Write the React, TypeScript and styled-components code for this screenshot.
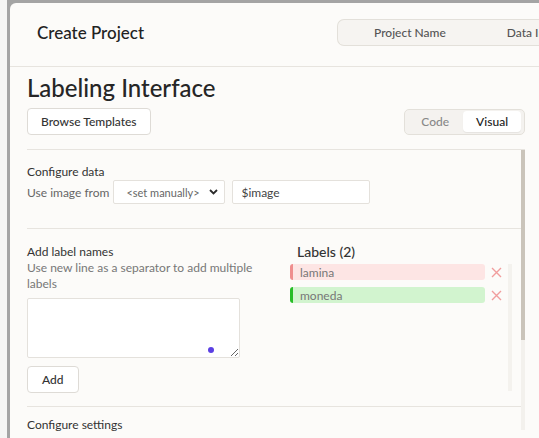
import React from "react";
import styled, { createGlobalStyle } from "styled-components";

type Label = {
    name: string;
    bg: string;
    bar: string;
};

const labels: Label[] = [
    { name: "lamina", bg: "#fde5e4", bar: "#ef8e8e" },
    { name: "moneda", bg: "#d2f4cf", bar: "#27bd27" },
];

const GlobalStyle = createGlobalStyle`
    html, body {
        margin: 0;
        padding: 0;
        background: #f5f5f4;
        overflow: hidden;
    }
    body {
        font-family: "Lato", "Liberation Sans", sans-serif;
        color: #222;
    }
    * {
        box-sizing: border-box;
    }
`;

export default function App() {
    return (
        <>
            <GlobalStyle />
            <Page>
                <Backdrop>
                    <Modal>
                        <Header>
                            <ModalTitle>Create Project</ModalTitle>
                            <Tabs>
                                <Tab>Project Name</Tab>
                                <Tab>Data Import</Tab>
                            </Tabs>
                        </Header>

                        <Body>
                            <PageTitle>Labeling Interface</PageTitle>
                            <Toolbar>
                                <Button>Browse Templates</Button>
                                <Toggle>
                                    <ToggleItem>Code</ToggleItem>
                                    <ToggleItem active>Visual</ToggleItem>
                                </Toggle>
                            </Toolbar>

                            <ScrollArea>
                                <Content>
                                    <Section pt={14} pb={24}>
                                        <SectionTitle>Configure data</SectionTitle>
                                        <DataRow>
                                            <Muted>Use image from</Muted>
                                            <SelectBox>
                                                <span>&lt;set manually&gt;</span>
                                                <svg width="9" height="6" viewBox="0 0 9 6">
                                                    <polyline points="1,1 4.5,4.5 8,1" fill="none" stroke="#2b2b2b" strokeWidth="1.8" />
                                                </svg>
                                            </SelectBox>
                                            <TextInput defaultValue="$image" />
                                        </DataRow>
                                    </Section>

                                    <Section pt={15} pb={13}>
                                        <Columns>
                                            <div>
                                                <SectionTitle>Add label names</SectionTitle>
                                                <Hint>Use new line as a separator to add multiple labels</Hint>
                                                <AreaWrap>
                                                    <TextArea />
                                                    <Dot />
                                                </AreaWrap>
                                                <SmallButton>Add</SmallButton>
                                            </div>
                                            <div>
                                                <LabelsTitle>Labels ({labels.length})</LabelsTitle>
                                                <LabelList>
                                                    <LabelItems>
                                                        {labels.map((l) => (
                                                            <LabelRow key={l.name}>
                                                                <LabelChip bg={l.bg} bar={l.bar}>{l.name}</LabelChip>
                                                                <svg width="11" height="11" viewBox="0 0 11 11">
                                                                    <path d="M1 1 L10 10 M10 1 L1 10" stroke="#f19d9d" strokeWidth="1.4" />
                                                                </svg>
                                                            </LabelRow>
                                                        ))}
                                                    </LabelItems>
                                                    <MiniTrack />
                                                </LabelList>
                                            </div>
                                        </Columns>
                                    </Section>

                                    <Section pt={10} pb={20}>
                                        <SectionTitle>Configure settings</SectionTitle>
                                    </Section>
                                </Content>
                                <Scrollbar>
                                    <Thumb />
                                </Scrollbar>
                            </ScrollArea>
                        </Body>
                    </Modal>
                </Backdrop>
            </Page>
        </>
    );
}

const Page = styled.div`
    height: 438px;
    padding-left: 7px;
    display: flex;
`;

const Backdrop = styled.div`
    flex: 1;
    min-width: 0;
    background: #a4a4a4;
    padding: 3px 0 0 3px;
    display: flex;
`;

const Modal = styled.div`
    flex: 1;
    min-width: 0;
    background: #fcfbf9;
    border-radius: 6px 0 0 0;
    display: flex;
    flex-direction: column;
    overflow: hidden;
`;

const Header = styled.div`
    height: 64px;
    flex-shrink: 0;
    border-bottom: 1px solid #e7e4df;
    display: grid;
    grid-template-columns: 300px max-content;
    align-items: center;
    padding-left: 27px;
    padding-bottom: 4px;
    overflow: hidden;
`;

const ModalTitle = styled.div`
    font-size: 17px;
    font-weight: 500;
    color: #222;
`;

const Tabs = styled.div`
    display: flex;
    height: 27px;
    align-items: center;
    padding-left: 3px;
    border: 1px solid #e3e0da;
    border-right: none;
    border-radius: 7px 0 0 7px;
    background: #f6f4f1;
`;

const Tab = styled.div`
    padding: 0 28px 0 33px;
    font-size: 12px;
    font-weight: 500;
    color: #555;
`;

const Body = styled.div`
    flex: 1;
    display: flex;
    flex-direction: column;
    padding: 0 14px 0 17px;
    min-height: 0;
`;

const PageTitle = styled.h1`
    margin: 6px 0 0;
    font-size: 24px;
    line-height: 29px;
    font-weight: 500;
    color: #262626;
`;

const Toolbar = styled.div`
    display: flex;
    justify-content: space-between;
    align-items: center;
    margin-top: 6px;
    padding-bottom: 14px;
`;

const Button = styled.button`
    height: 27px;
    padding: 0 13px;
    font-family: inherit;
    font-size: 12px;
    font-weight: 500;
    color: #333;
    background: #fff;
    border: 1px solid #dedbd6;
    border-radius: 4px;
`;

const Toggle = styled.div`
    display: flex;
    align-items: center;
    height: 26px;
    padding: 0 3px 0 2px;
    border: 1px solid #e3e0da;
    border-radius: 5px;
    background: #f4f2ef;
`;

const ToggleItem = styled.div<{ active?: boolean }>`
    height: 21px;
    display: flex;
    align-items: center;
    padding: 0 ${(p) => (p.active ? "13px" : "14px")};
    font-size: 12px;
    font-weight: 500;
    border-radius: 4px;
    color: ${(p) => (p.active ? "#222" : "#888")};
    background: ${(p) => (p.active ? "#fff" : "transparent")};
    box-shadow: ${(p) => (p.active ? "0 1px 1px rgba(0,0,0,0.06)" : "none")};
`;

const ScrollArea = styled.div`
    flex: 1;
    display: flex;
    border-top: 1px solid #e7e4df;
    min-height: 0;
`;

const Content = styled.div`
    flex: 1;
    min-width: 0;
`;

const Scrollbar = styled.div`
    width: 4px;
    background: #f3f1ed;
    margin-bottom: 8px;
`;

const Thumb = styled.div`
    height: 190px;
    background: #cac4ba;
`;

const Section = styled.div<{ pt: number; pb: number }>`
    padding: ${(p) => p.pt}px 0 ${(p) => p.pb}px;
    border-bottom: 1px solid #e7e4df;
`;

const SectionTitle = styled.div`
    font-size: 12px;
    line-height: 16px;
    color: #333;
`;

const DataRow = styled.div`
    display: flex;
    align-items: center;
`;

const Muted = styled.span`
    font-size: 12px;
    color: #666;
    margin-right: 4px;
`;

const SelectBox = styled.div`
    width: 112px;
    height: 24px;
    display: flex;
    align-items: center;
    justify-content: space-between;
    padding: 0 6px 0 12px;
    font-size: 11px;
    color: #666;
    background: #fff;
    border: 1px solid #e4e1dc;
    border-radius: 2px;
`;

const TextInput = styled.input`
    margin-left: 7px;
    width: 138px;
    height: 24px;
    padding: 0 8px;
    font-family: inherit;
    font-size: 12px;
    color: #444;
    background: #fff;
    border: 1px solid #e4e1dc;
    border-radius: 2px;
    outline: none;
`;

const Columns = styled.div`
    display: grid;
    grid-template-columns: 250px 1fr;
    column-gap: 13px;
`;

const Hint = styled.div`
    width: 238px;
    font-size: 12px;
    line-height: 16px;
    color: #777;
`;

const AreaWrap = styled.div`
    position: relative;
    width: 213px;
    margin-top: 6px;
`;

const TextArea = styled.textarea`
    display: block;
    width: 213px;
    height: 60px;
    background: #fff;
    border: 1px solid #e4e1dc;
    border-radius: 2px;
    outline: none;
`;

const Dot = styled.span`
    position: absolute;
    left: 181px;
    top: 49px;
    width: 6px;
    height: 6px;
    border-radius: 50%;
    background: #5b3fe3;
`;

const SmallButton = styled(Button)`
    margin-top: 8px;
    padding: 0 14px;
`;

const LabelsTitle = styled.div`
    padding-left: 7px;
    font-size: 14px;
    line-height: 16px;
    font-weight: 500;
    color: #333;
`;

const LabelList = styled.div`
    margin-top: 4px;
    height: 127px;
    display: flex;
    padding-right: 9px;
`;

const LabelItems = styled.div`
    flex: 1;
    display: flex;
    flex-direction: column;
    gap: 7px;
`;

const MiniTrack = styled.div`
    width: 4px;
    background: #f4f2ee;
`;

const LabelRow = styled.div`
    display: flex;
    align-items: center;
    gap: 6px;
`;

const LabelChip = styled.div<{ bg: string; bar: string }>`
    width: 195px;
    height: 16px;
    display: flex;
    align-items: center;
    padding-left: 7px;
    font-size: 12px;
    color: #777;
    background: ${(p) => p.bg};
    border-left: 3px solid ${(p) => p.bar};
    border-radius: 3px;
`;
